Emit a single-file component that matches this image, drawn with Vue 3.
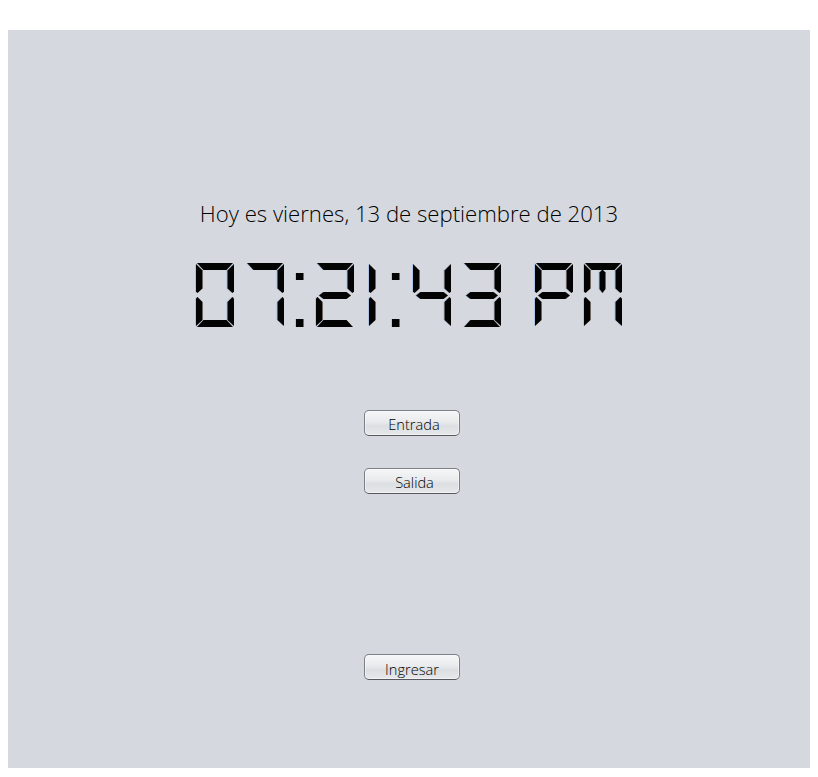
<script setup>
const H = 64
const segs = {
  t: '1,0 37,0 30.5,7 7.5,7',
  ul: '0,1 6.5,7.5 6.5,25.5 1.5,30 0,28.5',
  ur: '38,1 31.5,7.5 31.5,25.5 36.5,30 38,28.5',
  m: '3,32.5 7.5,29 30.5,29 35,32.5 30.5,36 7.5,36',
  ll: '0,35.5 1.5,34 6.5,39 6.5,57 0,63',
  lr: '38,35.5 36.5,34 31.5,39 31.5,57 38,63',
  b: '1,64 37,64 30.5,57 7.5,57',
  c: '18.5,6.5 21.5,9.5 21.5,26 18.5,30 15.5,26 15.5,9.5'
}
const glyphMap = {
  0: ['t', 'ul', 'ur', 'll', 'lr', 'b'],
  1: ['ul', 'll'],
  2: ['t', 'ur', 'm', 'll', 'b'],
  3: ['t', 'ur', 'm', 'lr', 'b'],
  4: ['ul', 'ur', 'm', 'lr'],
  7: ['t', 'ur', 'lr'],
  P: ['t', 'ul', 'ur', 'm', 'll'],
  M: ['t', 'ul', 'ur', 'c', 'll', 'lr']
}
// Seven-segment read-out: each character and where its cell starts on the display.
const cells = [
  ['0', 0], ['7', 50], [':', 100], ['2', 120], ['1', 173],
  [':', 196], ['4', 217], ['3', 267], ['P', 339], ['M', 388]
].map(([ch, x]) => ({
  ch, x,
  polys: ch === ':'
    ? ['0,10 7.5,10 7.5,17 0,17', '0,56 7.5,56 7.5,64 0,64']
    : glyphMap[ch].map(k => segs[k])
}))
const buttons = [
  { label: 'Entrada', cls: 'first' },
  { label: 'Salida', cls: 'second' },
  { label: 'Ingresar', cls: 'third' }
]
</script>

<template>
  <div class="page">
    <main class="panel">
      <h1 class="date">Hoy es viernes, 13 de septiembre de 2013</h1>
      <svg class="clock" :viewBox="`0 0 426 ${H}`" width="426" :height="H" role="img" aria-label="07:21:43 PM">
        <g v-for="(c, i) in cells" :key="i" :transform="`translate(${c.x} 0)`">
          <polygon v-for="(p, j) in c.polys" :key="j" :points="p" />
        </g>
      </svg>
      <button v-for="b in buttons" :key="b.label" :class="['btn', b.cls]" type="button">{{ b.label }}</button>
    </main>
  </div>
</template>

<style scoped>
.page {
  padding: 30px 8px 9px;
  background: #fff;
}
.panel {
  height: 738px;
  box-sizing: border-box;
  padding-top: 168px;
  background: #d5d9df;
  display: flex;
  flex-direction: column;
  align-items: center;
}
.date {
  margin: 0;
  font: 300 22.15px/30px "Open Sans", "Liberation Sans", sans-serif;
  color: #000;
  white-space: nowrap;
}
.clock {
  display: block;
  margin-top: 35px;
  fill: #030303;
  filter: drop-shadow(0.5px 0 0 rgba(235, 170, 110, 0.55)) drop-shadow(-0.5px 0 0 rgba(130, 175, 235, 0.5));
}
.btn {
  width: 96px;
  height: 26px;
  box-sizing: border-box;
  margin-left: 6px;
  padding: 1px 0 0;
  border: 1px solid #7d8087;
  border-bottom-color: #55585e;
  border-radius: 5px;
  background: linear-gradient(#f5f6f7 0%, #e9ebed 45%, #dcdfe2 62%, #e6e8ea 100%);
  box-shadow: inset 0 0 0 1px rgba(255, 255, 255, 0.45);
  font: 300 14.6px/22px "Open Sans", "Liberation Sans", sans-serif;
  color: #000;
}
.first { margin-top: 83px; padding-left: 4px; }
.second { margin-top: 32px; padding-left: 5px; }
.third { margin-top: 160px; padding-top: 3px; }
</style>

<style>
html, body { margin: 0; background: #fff; }
</style>
